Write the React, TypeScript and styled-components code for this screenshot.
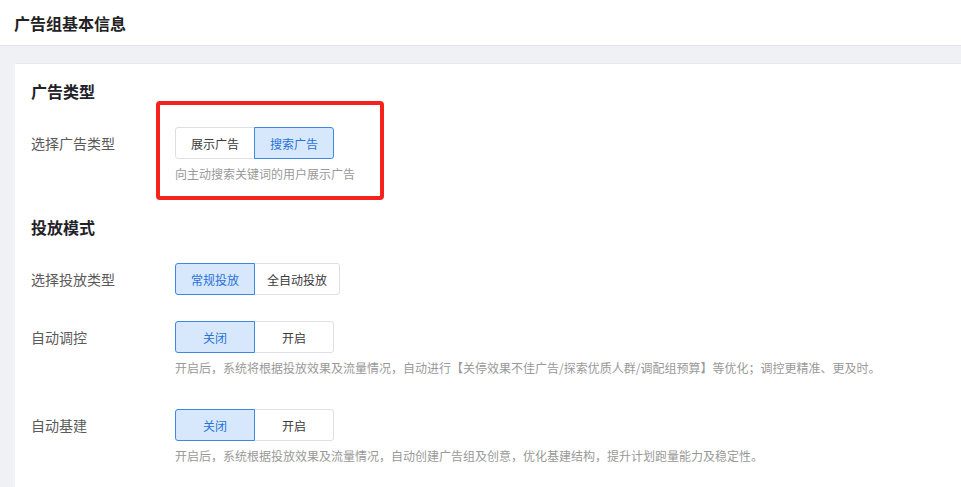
import React from 'react'
import styled, { createGlobalStyle } from 'styled-components'

const GlobalStyle = createGlobalStyle`
  html, body {
    margin: 0;
    padding: 0;
    background: #ffffff;
    font-family: "Noto Sans CJK SC", "Noto Sans", "Liberation Sans", sans-serif;
  }
`

interface Option {
  label: string
}

interface FieldProps {
  label: string
  options: Option[]
  active: number
  hint?: string
  marked?: boolean
}

const Field = (props: FieldProps) => {
  return (
    <FormItem>
      <Label>{props.label}</Label>
      <Control>
        {props.marked && <Marker />}
        <Segmented>
          {props.options.map((opt, i) => (
            <SegButton key={opt.label} $active={i === props.active} $first={i === 0}>
              {opt.label}
            </SegButton>
          ))}
        </Segmented>
        {props.hint && <Hint>{props.hint}</Hint>}
      </Control>
    </FormItem>
  )
}

export default function App() {
  return (
    <>
      <GlobalStyle />
      <Header>
        <PageTitle>广告组基本信息</PageTitle>
      </Header>
      <Body>
        <Card>
          <SectionTitle>广告类型</SectionTitle>
          <Field
            label="选择广告类型"
            options={[{ label: '展示广告' }, { label: '搜索广告' }]}
            active={1}
            hint="向主动搜索关键词的用户展示广告"
            marked
          />
          <SectionTitle>投放模式</SectionTitle>
          <Field
            label="选择投放类型"
            options={[{ label: '常规投放' }, { label: '全自动投放' }]}
            active={0}
          />
          <Field
            label="自动调控"
            options={[{ label: '关闭' }, { label: '开启' }]}
            active={0}
            hint="开启后，系统将根据投放效果及流量情况，自动进行【关停效果不佳广告/探索优质人群/调配组预算】等优化；调控更精准、更及时。"
          />
          <Field
            label="自动基建"
            options={[{ label: '关闭' }, { label: '开启' }]}
            active={0}
            hint="开启后，系统根据投放效果及流量情况，自动创建广告组及创意，优化基建结构，提升计划跑量能力及稳定性。"
          />
        </Card>
      </Body>
    </>
  )
}

const Header = styled.div`
  height: 46px;
  display: flex;
  align-items: center;
  padding-left: 14px;
  border-bottom: 1px solid #e3e5ea;
  box-sizing: border-box;
  background: #ffffff;
`

const PageTitle = styled.h1`
  margin: 0;
  font-size: 16px;
  font-weight: 700;
  color: #222;
`

const Body = styled.div`
  background: #f0f1f4;
  padding: 17px 0 0 15px;
  height: calc(100vh - 46px);
  box-sizing: border-box;
  overflow: hidden;
`

const Card = styled.div`
  background: #ffffff;
  border-top: 1px solid #e8e9ed;
  padding: 15px 16px 40px;
  min-height: 100%;
  box-sizing: border-box;
`

const SectionTitle = styled.h2`
  margin: 0 0 24px;
  font-size: 16px;
  line-height: 24px;
  font-weight: 700;
  color: #1f2329;
`

const FormItem = styled.div`
  display: flex;
  align-items: flex-start;
  margin-bottom: 26px;
`

const Label = styled.div`
  width: 144px;
  flex-shrink: 0;
  font-size: 14px;
  line-height: 32px;
  color: #5a5a5a;
`

const Control = styled.div`
  position: relative;
  display: flex;
  flex-direction: column;
  align-items: flex-start;
`

const Marker = styled.div`
  position: absolute;
  left: -19px;
  top: -26px;
  width: 228px;
  height: 99px;
  border: 4px solid #f5231c;
  border-radius: 4px;
  box-sizing: border-box;
  pointer-events: none;
`

const Segmented = styled.div`
  display: flex;
`

const SegButton = styled.div<{ $active: boolean; $first: boolean }>`
  min-width: 80px;
  height: 32px;
  padding: 0 12px;
  box-sizing: border-box;
  display: flex;
  align-items: center;
  justify-content: center;
  font-size: 12px;
  color: ${(p) => (p.$active ? '#2a72d6' : '#3a3a3a')};
  background: ${(p) => (p.$active ? '#d7e8fd' : '#ffffff')};
  border: 1px solid ${(p) => (p.$active ? '#3f88e2' : '#dcdfe6')};
  border-radius: ${(p) => (p.$first ? '3px 0 0 3px' : '0 3px 3px 0')};
  margin-left: ${(p) => (p.$first ? '0' : '-1px')};
  position: relative;
  z-index: ${(p) => (p.$active ? 1 : 0)};
`

const Hint = styled.div`
  margin: 6px 0 6px;
  font-size: 12px;
  line-height: 18px;
  color: #999;
  white-space: nowrap;
`
